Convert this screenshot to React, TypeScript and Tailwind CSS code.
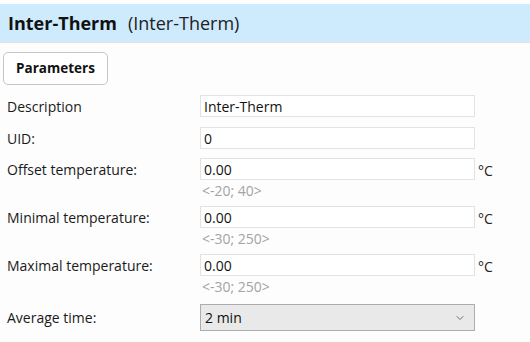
import React from 'react';
import { ChevronDown } from 'lucide-react';

const font = { fontFamily: '"Open Sans", "Noto Sans", sans-serif' };

interface FieldProps {
  label: string;
  value: string;
  unit?: string;
  hint?: string;
  className?: string;
}

const Field = ({ label, value, unit, hint, className }: FieldProps) => (
  <div className={className}>
    <div className="flex items-center h-[22px]">
      <div className="w-[193px] text-[14px] leading-[18px] text-[#1a1a1a] pt-[2px]">{label}</div>
      <div className="w-[275px] h-[22px] border border-[#e3e3e3] bg-white flex items-center pl-[3px] text-[14px] text-[#111]">
        {value}
      </div>
      {unit && <span className="ml-[3px] pt-[3px] text-[14px] leading-[18px] text-[#222]">{unit}</span>}
    </div>
    {hint && (
      <div className="h-[26px] pl-[195px] pt-[2px] text-[14px] leading-[18px] text-[#a3a3a3]">{hint}</div>
    )}
  </div>
);

const App = () => {
  return (
    <div className="w-[530px] h-[342px] bg-[#fdfdfd] overflow-hidden" style={font}>
      {/* Header */}
      <div className="mt-[4px] h-[39px] bg-[#cdebfd] border-b border-[#e2e2e2] flex items-center pl-[8px]">
        <span className="text-[18px] font-bold text-[#111]">Inter-Therm</span>
        <span className="ml-[11px] text-[18px] text-[#222]">(Inter-Therm)</span>
      </div>

      <div className="pl-[7px]">
        <button className="block mt-[9px] -ml-[4px] w-[105px] h-[33px] rounded-[5px] border border-[#c6c6c6] bg-white text-[13.5px] font-bold text-[#111]">
          Parameters
        </button>

        <Field className="mt-[10px]" label="Description" value="Inter-Therm" />
        <Field className="mt-[10px]" label="UID:" value="0" />
        <Field className="mt-[9px]" label="Offset temperature:" value="0.00" unit="°C" hint="<-20; 40>" />
        <Field label="Minimal temperature:" value="0.00" unit="°C" hint="<-30; 250>" />
        <Field label="Maximal temperature:" value="0.00" unit="°C" hint="<-30; 250>" />

        <div className="mt-[2px] flex items-center">
          <div className="w-[193px] text-[14px] text-[#1a1a1a]">Average time:</div>
          <div className="w-[275px] h-[27px] border border-[#adadad] bg-[#e9e9e9] flex items-center justify-between pl-[4px] pr-[8px] text-[14px] text-[#111]">
            <span>2 min</span>
            <ChevronDown size={12} strokeWidth={2} className="text-[#6d6d6d]" />
          </div>
        </div>
      </div>
    </div>
  );
};

export default App;
